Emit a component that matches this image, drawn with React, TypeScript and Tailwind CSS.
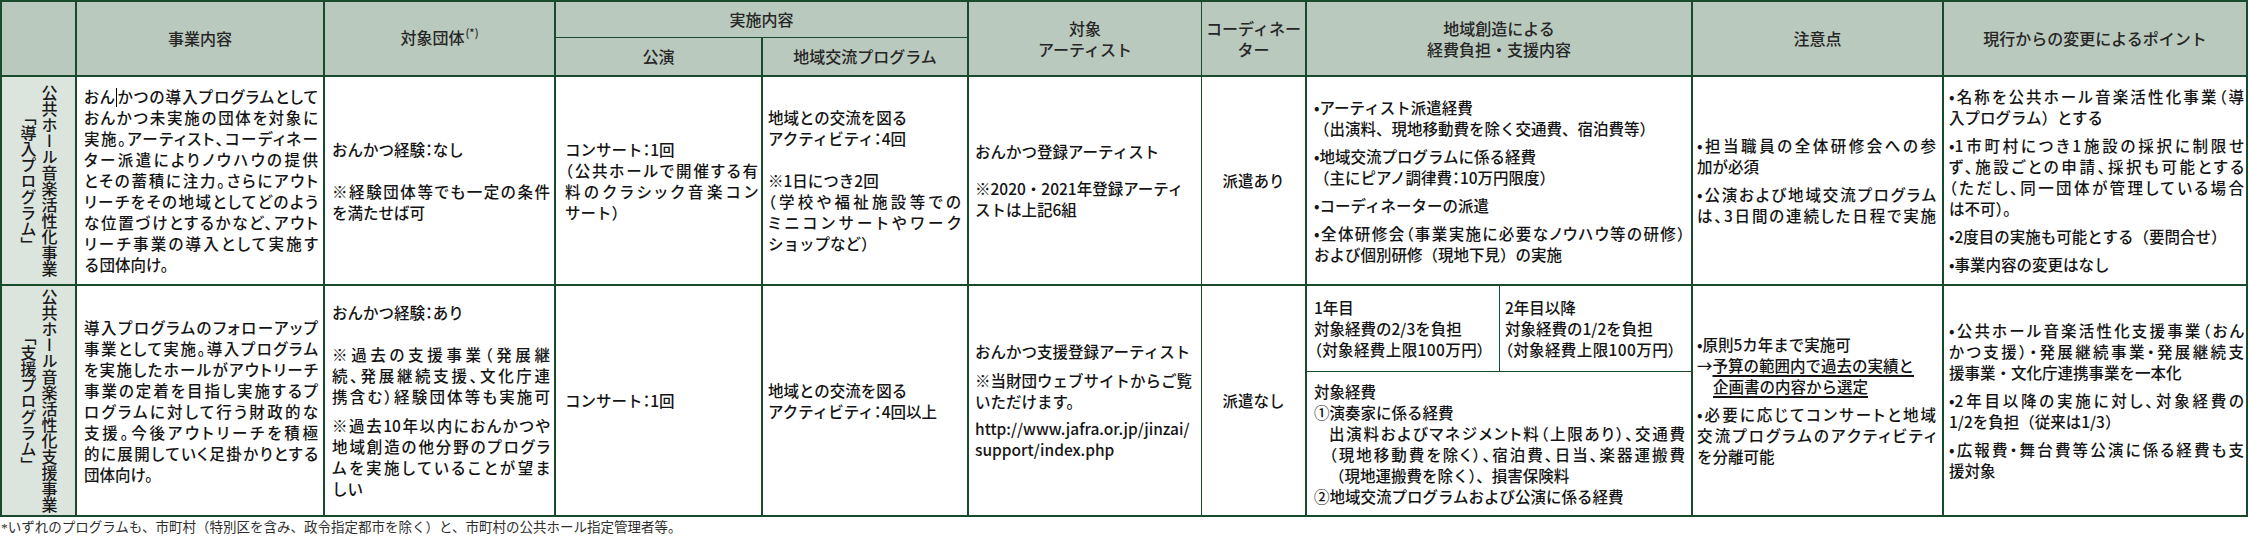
import React from "react";

type P = { children?: React.ReactNode; className?: string };

const J = ({ children, className = "" }: P) => (
  <div className={"whitespace-nowrap text-justify [text-align-last:justify] [font-feature-settings:'palt'] " + className}>
    {children}
  </div>
);
const N = ({ children, className = "" }: P) => <div className={"whitespace-nowrap " + className}>{children}</div>;
const Sp = ({ className = "" }: P) => <div className={className} />;
const Co = () => <span className="[font-feature-settings:'halt']">：</span>;

const HD =
  "bg-[#b9c9bd] border-b-2 border-[#1a4a2c] flex items-center justify-center text-center text-[16px] leading-[21px] text-[#262626]";
const TD = "bg-white border-b-2 border-[#1a4a2c] flex flex-col justify-center";
const SIDE = "bg-[#dce4de] border-r-2 border-b-2 border-[#1a4a2c] flex items-center justify-center";

function Side({ main, sub }: { main: string; sub: string }) {
  return (
    <div className="[writing-mode:vertical-rl] text-center text-[16px] leading-[21px] text-[#1a1a1a]">
      {main}
      <br />
      {sub}
    </div>
  );
}

export default function App() {
  return (
    <div className="w-[2249px] h-[538px] overflow-hidden bg-white font-['Noto_Sans_CJK_JP','Noto_Sans',sans-serif] font-medium text-[15.5px] leading-[21px] text-[#141414]">
      <div className="grid w-[2248px] grid-cols-[75px_248px_231px_207px_206px_233px_105px_386px_251px_304px] grid-rows-[36px_39px_209px_231px] border-l-2 border-t-2 border-[#1a4a2c]">
        {/* header */}
        <div className={HD + " col-start-1 row-start-1 row-span-2 border-r-2"} />
        <div className={HD + " col-start-2 row-start-1 row-span-2 border-r-2"}>事業内容</div>
        <div className={HD + " col-start-3 row-start-1 row-span-2 border-r-2"}>
          <span>
            対象団体<span className="text-[11px] relative top-[-7px] ml-[1px]">(*)</span>
          </span>
        </div>
        <div className="bg-[#b9c9bd] border-b border-r-2 border-[#1a4a2c] flex items-center justify-center text-[16px] leading-[21px] text-[#262626] col-start-4 col-span-2 row-start-1">
          実施内容
        </div>
        <div className={HD + " col-start-4 row-start-2 border-r-2"}>公演</div>
        <div className={HD + " col-start-5 row-start-2 border-r-2"}>地域交流プログラム</div>
        <div className={HD + " col-start-6 row-start-1 row-span-2 border-r"}>
          <div>
            対象
            <br />
            アーティスト
          </div>
        </div>
        <div className={HD + " col-start-7 row-start-1 row-span-2 border-r-2"}>
          <div>
            コーディネー
            <br />
            ター
          </div>
        </div>
        <div className={HD + " col-start-8 row-start-1 row-span-2 border-r-2"}>
          <div>
            地域創造による
            <br />
            経費負担・支援内容
          </div>
        </div>
        <div className={HD + " col-start-9 row-start-1 row-span-2 border-r-2"}>注意点</div>
        <div className={HD + " col-start-10 row-start-1 row-span-2 border-r-2"}>現行からの変更によるポイント</div>

        {/* row 1 */}
        <div className={SIDE + " col-start-1 row-start-3"}>
          <Side main="公共ホール音楽活性化事業" sub="「導入プログラム」" />
        </div>
        <div className={TD + " col-start-2 row-start-3 border-r-2 pl-[7px] pr-[5px]"}>
          <J>
            おん
            <span className="inline-block w-0 h-[19px] border-l border-black align-[-4px]" />
            かつの導入プログラムとして
          </J>
          <J>おんかつ未実施の団体を対象に</J>
          <J>実施。アーティスト、コーディネー</J>
          <J>ター派遣によりノウハウの提供</J>
          <J>とその蓄積に注力。さらにアウト</J>
          <J>リーチをその地域としてどのよう</J>
          <J>な位置づけとするかなど、アウト</J>
          <J>リーチ事業の導入として実施す</J>
          <N>る団体向け。</N>
        </div>
        <div className={TD + " col-start-3 row-start-3 border-r-2 pl-[7px] pr-[4px]"}>
          <N>
            おんかつ経験<Co />なし
          </N>
          <Sp className="h-[21px]" />
          <J>※経験団体等でも一定の条件</J>
          <N>を満たせば可</N>
        </div>
        <div className={TD + " col-start-4 row-start-3 border-r-2 pl-[9px] pr-[3px]"}>
          <N>
            コンサート<Co />1回
          </N>
          <J>（公共ホールで開催する有</J>
          <J>料のクラシック音楽コン</J>
          <N>サート）</N>
        </div>
        <div className={TD + " col-start-5 row-start-3 border-r-2 pl-[5px] pr-[6px]"}>
          <N>地域との交流を図る</N>
          <N>
            アクティビティ<Co />4回
          </N>
          <Sp className="h-[21px]" />
          <N>※1日につき2回</N>
          <J>（学校や福祉施設等での</J>
          <J>ミニコンサートやワーク</J>
          <N>ショップなど）</N>
        </div>
        <div className={TD + " col-start-6 row-start-3 border-r pl-[6px] pr-[6px]"}>
          <N>おんかつ登録アーティスト</N>
          <Sp className="h-[16px]" />
          <N>※2020・2021年登録アーティ</N>
          <N>ストは上記6組</N>
        </div>
        <div className={TD + " col-start-7 row-start-3 border-r-2 items-center"}>
          <N>派遣あり</N>
        </div>
        <div className={TD + " col-start-8 row-start-3 border-r-2 pl-[7px] pr-[6px]"}>
          <N>•アーティスト派遣経費</N>
          <N>（出演料、現地移動費を除く交通費、宿泊費等）</N>
          <Sp className="h-[7px]" />
          <N>•地域交流プログラムに係る経費</N>
          <N>
            （主にピアノ調律費<Co />10万円限度）
          </N>
          <Sp className="h-[7px]" />
          <N>•コーディネーターの派遣</N>
          <Sp className="h-[7px]" />
          <J>•全体研修会（事業実施に必要なノウハウ等の研修）</J>
          <N>および個別研修（現地下見）の実施</N>
        </div>
        <div className={TD + " col-start-9 row-start-3 border-r-2 pl-[4px] pr-[6px]"}>
          <J>•担当職員の全体研修会への参</J>
          <N>加が必須</N>
          <Sp className="h-[7px]" />
          <J>•公演および地域交流プログラム</J>
          <J>は、3日間の連続した日程で実施</J>
        </div>
        <div className={TD + " col-start-10 row-start-3 border-r-2 pl-[5px] pr-[2px]"}>
          <J>•名称を公共ホール音楽活性化事業（導</J>
          <N>入プログラム）とする</N>
          <Sp className="h-[7px]" />
          <J>•1市町村につき1施設の採択に制限せ</J>
          <J>ず、施設ごとの申請、採択も可能とする</J>
          <J>（ただし、同一団体が管理している場合</J>
          <N>は不可）。</N>
          <Sp className="h-[7px]" />
          <N>•2度目の実施も可能とする（要問合せ）</N>
          <Sp className="h-[7px]" />
          <N>•事業内容の変更はなし</N>
        </div>

        {/* row 2 */}
        <div className={SIDE + " col-start-1 row-start-4"}>
          <Side main="公共ホール音楽活性化支援事業" sub="「支援プログラム」" />
        </div>
        <div className={TD + " col-start-2 row-start-4 border-r-2 pl-[7px] pr-[5px]"}>
          <J>導入プログラムのフォローアップ</J>
          <J>事業として実施。導入プログラム</J>
          <J>を実施したホールがアウトリーチ</J>
          <J>事業の定着を目指し実施するプ</J>
          <J>ログラムに対して行う財政的な</J>
          <J>支援。今後アウトリーチを積極</J>
          <J>的に展開していく足掛かりとする</J>
          <N>団体向け。</N>
        </div>
        <div className={TD + " col-start-3 row-start-4 border-r-2 pl-[7px] pr-[4px]"}>
          <N>
            おんかつ経験<Co />あり
          </N>
          <Sp className="h-[21px]" />
          <J>※過去の支援事業（発展継</J>
          <J>続、発展継続支援、文化庁連</J>
          <J>携含む）経験団体等も実施可</J>
          <Sp className="h-[8px]" />
          <J>※過去10年以内におんかつや</J>
          <J>地域創造の他分野のプログラ</J>
          <J>ムを実施していることが望ま</J>
          <N>しい</N>
        </div>
        <div className={TD + " col-start-4 row-start-4 border-r-2 pl-[9px] pr-[3px]"}>
          <N>
            コンサート<Co />1回
          </N>
        </div>
        <div className={TD + " col-start-5 row-start-4 border-r-2 pl-[5px] pr-[6px]"}>
          <N>地域との交流を図る</N>
          <N>
            アクティビティ<Co />4回以上
          </N>
        </div>
        <div className={TD + " col-start-6 row-start-4 border-r pl-[6px] pr-[6px]"}>
          <N>おんかつ支援登録アーティスト</N>
          <Sp className="h-[8px]" />
          <N>※当財団ウェブサイトからご覧</N>
          <N>いただけます。</N>
          <Sp className="h-[6px]" />
          <N>http://www.jafra.or.jp/jinzai/</N>
          <N>support/index.php</N>
        </div>
        <div className={TD + " col-start-7 row-start-4 border-r-2 items-center"}>
          <N>派遣なし</N>
        </div>
        <div className="bg-white border-b-2 border-r-2 border-[#1a4a2c] col-start-8 row-start-4 grid grid-cols-[193px_1fr] grid-rows-[86px_1fr]">
          <div className="border-r border-b border-[#1a4a2c] flex flex-col justify-center pl-[7px]">
            <N>1年目</N>
            <N>対象経費の2/3を負担</N>
            <N className="[font-feature-settings:'palt'] tracking-[0.4px]">（対象経費上限100万円）</N>
          </div>
          <div className="border-b border-[#1a4a2c] flex flex-col justify-center pl-[5px]">
            <N>2年目以降</N>
            <N>対象経費の1/2を負担</N>
            <N className="[font-feature-settings:'palt'] tracking-[0.4px]">（対象経費上限100万円）</N>
          </div>
          <div className="col-span-2 flex flex-col justify-center pl-[7px] pr-[6px]">
            <N>対象経費</N>
            <N>①演奏家に係る経費</N>
            <J className="pl-[15px]">出演料およびマネジメント料（上限あり）、交通費</J>
            <J className="pl-[15px]">（現地移動費を除く）、宿泊費、日当、楽器運搬費</J>
            <N className="pl-[15px]">（現地運搬費を除く）、損害保険料</N>
            <N>②地域交流プログラムおよび公演に係る経費</N>
          </div>
        </div>
        <div className={TD + " col-start-9 row-start-4 border-r-2 pl-[4px] pr-[6px]"}>
          <N>•原則5カ年まで実施可</N>
          <N>
            →<span className="underline decoration-2 underline-offset-[3px]">予算の範囲内で過去の実績と</span>
          </N>
          <N className="pl-[16px]">
            <span className="underline decoration-2 underline-offset-[3px]">企画書の内容から選定</span>
          </N>
          <Sp className="h-[7px]" />
          <J>•必要に応じてコンサートと地域</J>
          <J>交流プログラムのアクティビティ</J>
          <N>を分離可能</N>
        </div>
        <div className={TD + " col-start-10 row-start-4 border-r-2 pl-[5px] pr-[2px]"}>
          <J>•公共ホール音楽活性化支援事業（おん</J>
          <J>かつ支援）・発展継続事業・発展継続支</J>
          <N>援事業・文化庁連携事業を一本化</N>
          <Sp className="h-[7px]" />
          <J>•2年目以降の実施に対し、対象経費の</J>
          <N>1/2を負担（従来は1/3）</N>
          <Sp className="h-[7px]" />
          <J>•広報費・舞台費等公演に係る経費も支</J>
          <N>援対象</N>
        </div>
      </div>
      <div className="mt-[3px] pl-[1px] whitespace-nowrap text-[13.5px] leading-[16px] font-normal text-[#2e2e2e] font-['Liberation_Serif','Noto_Sans_CJK_JP',serif]">
        *いずれのプログラムも、市町村（特別区を含み、政令指定都市を除く）と、市町村の公共ホール指定管理者等。
      </div>
    </div>
  );
}
